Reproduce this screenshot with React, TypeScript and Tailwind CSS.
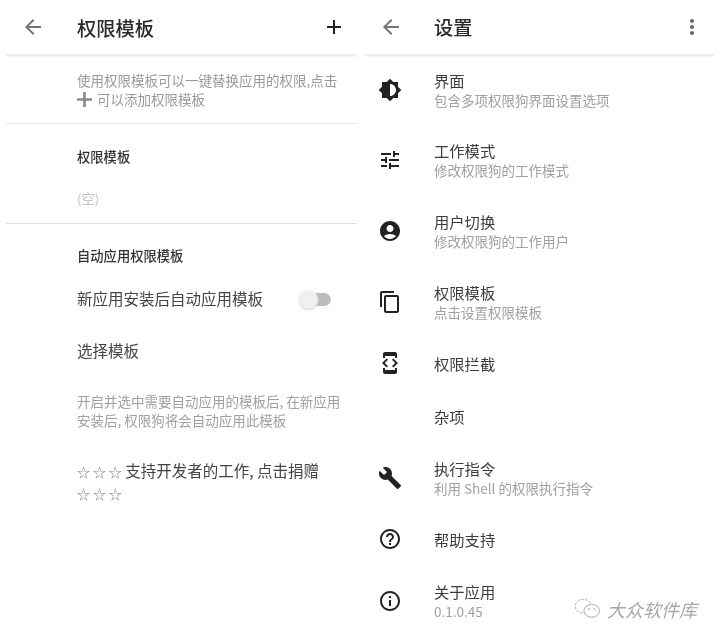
import React from "react";
import {
  MdAdd,
  MdArrowBack,
  MdMoreVert,
  MdTune,
  MdAccountCircle,
  MdContentCopy,
  MdDeveloperMode,
  MdBuild,
  MdHelpOutline,
  MdInfoOutline,
} from "react-icons/md";

const BrightnessIcon = () => (
  <svg viewBox="0 0 24 24" className="w-[24px] h-[24px]" fill="#222">
    <path d="M20 15.31L23.31 12 20 8.69V4h-4.69L12 .69 8.69 4H4v4.69L.69 12 4 15.31V20h4.69L12 23.31 15.31 20H20v-4.69zM12 18V6c3.31 0 6 2.69 6 6s-2.69 6-6 6z" />
  </svg>
);

const rows = [
  { h: "h-[70.7px]", icon: <BrightnessIcon />, title: "界面", sub: "包含多项权限狗界面设置选项" },
  { h: "h-[70.7px]", icon: <MdTune size={24} />, title: "工作模式", sub: "修改权限狗的工作模式" },
  { h: "h-[70.7px]", icon: <MdAccountCircle size={24} />, title: "用户切换", sub: "修改权限狗的工作用户" },
  { h: "h-[70.7px]", icon: <MdContentCopy size={24} />, title: "权限模板", sub: "点击设置权限模板" },
  { h: "h-[52px]", icon: <MdDeveloperMode size={24} />, title: "权限拦截" },
  { h: "h-[53.5px]", title: "杂项" },
  { h: "h-[70.7px]", icon: <MdBuild size={24} />, title: "执行指令", sub: "利用 Shell 的权限执行指令" },
  { h: "h-[52px]", icon: <MdHelpOutline size={24} />, title: "帮助支持" },
  { h: "h-[70.7px]", icon: <MdInfoOutline size={24} />, title: "关于应用", sub: "0.1.0.45" },
];

const Header = ({ title, right, titleClass }: { title: string; right: React.ReactNode; titleClass: string }) => (
  <div className="h-[56px] flex items-center border-b-2 border-[#efefef] shadow-[0_1px_2px_#f4f4f4]">
    <div className="w-[70px] pl-[15px] text-[#757575]">
      <MdArrowBack size={24} />
    </div>
    <div className={`flex-1 text-[19.3px] font-medium text-[#2a2a2a] ${titleClass}`}>{title}</div>
    <div className="text-[#222]">{right}</div>
  </div>
);

export default function App() {
  return (
    <div
      className="relative w-[720px] h-[642px] overflow-hidden bg-white flex blur-[0.4px]"
      style={{ fontFamily: '"Noto Sans CJK SC", "Noto Sans", sans-serif' }}
    >
      {/* left screen */}
      <div className="w-[351px] ml-[6px]">
        <Header title="权限模板" titleClass="pl-[1px] pt-[2px]" right={<MdAdd size={24} className="mr-[11px]" />} />
        <div className="h-[68px] pl-[71px] pt-[15px] text-[13.5px] leading-[19px] text-[#9a9a9a] border-b border-[#e8e8e8]">
          <div className="whitespace-nowrap">使用权限模板可以一键替换应用的权限,点击</div>
          <div className="flex items-center gap-[5px] h-[19px]">
            <svg viewBox="0 0 15 15" className="w-[15px] h-[15px]" stroke="#8a8a8a" strokeWidth="2.6">
              <path d="M0 7.5h15M7.5 0v15" />
            </svg>
            <span>可以添加权限模板</span>
          </div>
        </div>
        <div className="h-[100px] pl-[71px] pt-[23px] border-b border-[#dedede]">
          <div className="text-[13.3px] leading-[19px] font-medium text-[#333]">权限模板</div>
          <div className="mt-[23px] text-[13.3px] leading-[19px] text-[#c4c4c4]">(空)</div>
        </div>
        <div className="pl-[71px] pt-[22px]">
          <div className="text-[13.3px] leading-[19px] font-medium text-[#333]">自动应用权限模板</div>
          <div className="h-[52px] mt-[8px] flex items-center justify-between pr-[26px]">
            <span className="text-[15.5px] text-[#444]">新应用安装后自动应用模板</span>
            <div className="relative w-[31px] h-[13px] rounded-full bg-[#bdbdbd]">
              <div className="absolute left-[-1px] top-[-3px] w-[19px] h-[19px] rounded-full bg-[#f0f0f0] shadow-[0_1px_2px_#d4d4d4]" />
            </div>
          </div>
          <div className="h-[52px] flex items-center text-[15.5px] text-[#444]">选择模板</div>
          <div className="mt-[15px] text-[13.5px] leading-[19px] text-[#a0a0a0] whitespace-nowrap">
            开启并选中需要自动应用的模板后, 在新应用
            <br />
            安装后, 权限狗将会自动应用此模板
          </div>
          <div className="mt-[30px] text-[15.5px] leading-[20px] text-[#444]">
            <span className="text-[13px] text-[#8a8a8a]">☆ ☆ ☆</span> 支持开发者的工作, 点击捐赠
            <br />
            <span className="text-[13px] text-[#8a8a8a]">☆ ☆ ☆</span>
          </div>
        </div>
      </div>

      {/* right screen */}
      <div className="w-[350px] ml-[7px]">
        <Header title="设置" titleClass="" right={<MdMoreVert size={24} className="mr-[10px] text-[#666]" />} />
        <div className="-mt-[1.7px]">
          {rows.map((row) => (
            <div key={row.title} className={`flex items-center ${row.h}`}>
              <div className="w-[70px] pl-[14px] text-[#222]">{row.icon}</div>
              <div>
                <div className="text-[15.3px] leading-[20px] text-[#3c3c3c]">{row.title}</div>
                {row.sub && <div className="text-[13.5px] leading-[20px] text-[#a0a0a0]">{row.sub}</div>}
              </div>
            </div>
          ))}
        </div>
      </div>

      {/* watermark */}
      <div className="absolute left-[574px] top-[598px] flex items-center gap-[5px]">
        <svg viewBox="0 0 30 24" className="w-[28px] h-[22px]" fill="white" stroke="#9a9a9a" strokeWidth="0.9">
          <ellipse cx="10" cy="9" rx="9" ry="7.5" strokeDasharray="3 1.5" />
          <ellipse cx="19" cy="14" rx="8.5" ry="7" />
          <circle cx="16" cy="12" r="0.6" />
          <circle cx="22" cy="12" r="0.6" />
        </svg>
        <span className="text-[18px] leading-[22px] text-[#a8a8a8] italic">大众软件库</span>
      </div>
    </div>
  );
}
